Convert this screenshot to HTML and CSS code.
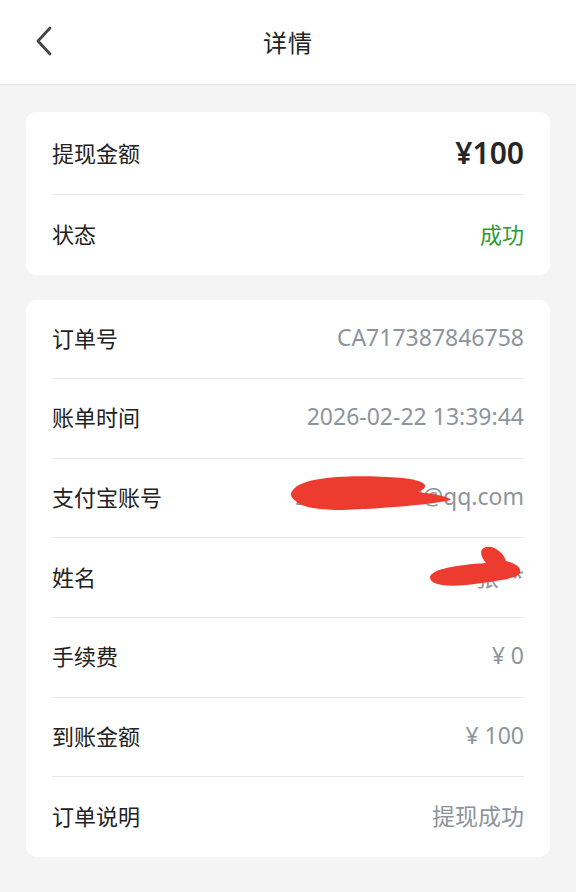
FILE: index.html
```html
<!DOCTYPE html>
<html lang="zh">
<head>
<meta charset="utf-8">
<link rel="stylesheet" href="styles.css">
</head>
<body>
<header class="nav">
  <svg class="back" width="20" height="30" viewBox="0 0 20 30"><path d="M16 2 L4 15 L16 28" fill="none" stroke="#444" stroke-width="2.8" stroke-linecap="round" stroke-linejoin="round"/></svg>
  <div class="title">详情</div>
</header>
<main class="page">
  <section class="card">
    <div class="row first"><span class="label">提现金额</span><span class="amount">¥100</span></div>
    <div class="row"><span class="label">状态</span><span class="ok">成功</span></div>
  </section>
  <section class="card">
    <div class="row"><span class="label">订单号</span><span class="val">CA717387846758</span></div>
    <div class="row"><span class="label">账单时间</span><span class="val">2026-02-22 13:39:44</span></div>
    <div class="row"><span class="label">支付宝账号</span><span class="val masked">2*********@qq.com
      <svg class="scrib scrib1" width="180" height="50" viewBox="0 0 180 50"><path d="M10 22 C20 8 70 6 120 10 C140 12 150 18 135 24 C150 26 165 28 168 32 C150 36 110 40 60 42 C40 42 20 40 14 34 C8 30 6 26 10 22 Z" fill="#ee3b30"/></svg>
    </span></div>
    <div class="row"><span class="label">姓名</span><span class="val masked">张**
      <svg class="scrib scrib2" width="100" height="46" viewBox="0 0 100 46"><path d="M4 34 C6 26 30 22 60 20 C55 14 52 6 60 4 C68 2 78 10 80 18 C88 20 96 24 94 30 C90 36 70 38 40 42 C20 44 4 42 4 34 Z" fill="#ee3b30"/></svg>
    </span></div>
    <div class="row"><span class="label">手续费</span><span class="val">¥ 0</span></div>
    <div class="row"><span class="label">到账金额</span><span class="val">¥ 100</span></div>
    <div class="row"><span class="label">订单说明</span><span class="val">提现成功</span></div>
  </section>
</main>
</body>
</html>
```
FILE: styles.css
```css
* { box-sizing: border-box; }
html, body { margin: 0; padding: 0; }
body {
  width: 576px;
  height: 892px;
  background: #f4f4f4;
  font-family: "Noto Sans CJK SC", "Noto Sans", sans-serif;
  color: #222;
  overflow: hidden;
}
.nav {
  height: 85px;
  background: #fff;
  border-bottom: 1px solid #e4e4e4;
  display: flex;
  align-items: center;
  justify-content: center;
  position: relative;
}
.back { position: absolute; left: 34px; top: 26px; }
.title { font-size: 24px; color: #222; letter-spacing: 1px; margin-top: -2px; }
.page {
  padding: 27px 26px 0;
  display: flex;
  flex-direction: column;
  gap: 25px;
}
.card {
  background: #fff;
  border-radius: 10px;
  padding: 0 26px;
}
.row {
  height: 79.6px;
  padding-bottom: 4px;
  display: flex;
  align-items: center;
  justify-content: space-between;
  border-bottom: 1px solid #e6e6e6;
}
.row.first { height: 83px; padding-bottom: 2px; }
.row:last-child { border-bottom: none; }
.label { font-size: 22px; color: #222; }
.amount { font-family: "Noto Sans", sans-serif; font-weight: 600; font-size: 30px; color: #262626; }
.ok { font-size: 22px; color: #2f9a2f; }
.val { font-family: "Noto Sans", "Noto Sans CJK SC", sans-serif; font-size: 23px; color: #8e949c; }
.masked { position: relative; }
.scrib { position: absolute; }
.scrib1 { left: -12px; top: -12px; }
.scrib2 { left: -50px; top: -16px; }
```
